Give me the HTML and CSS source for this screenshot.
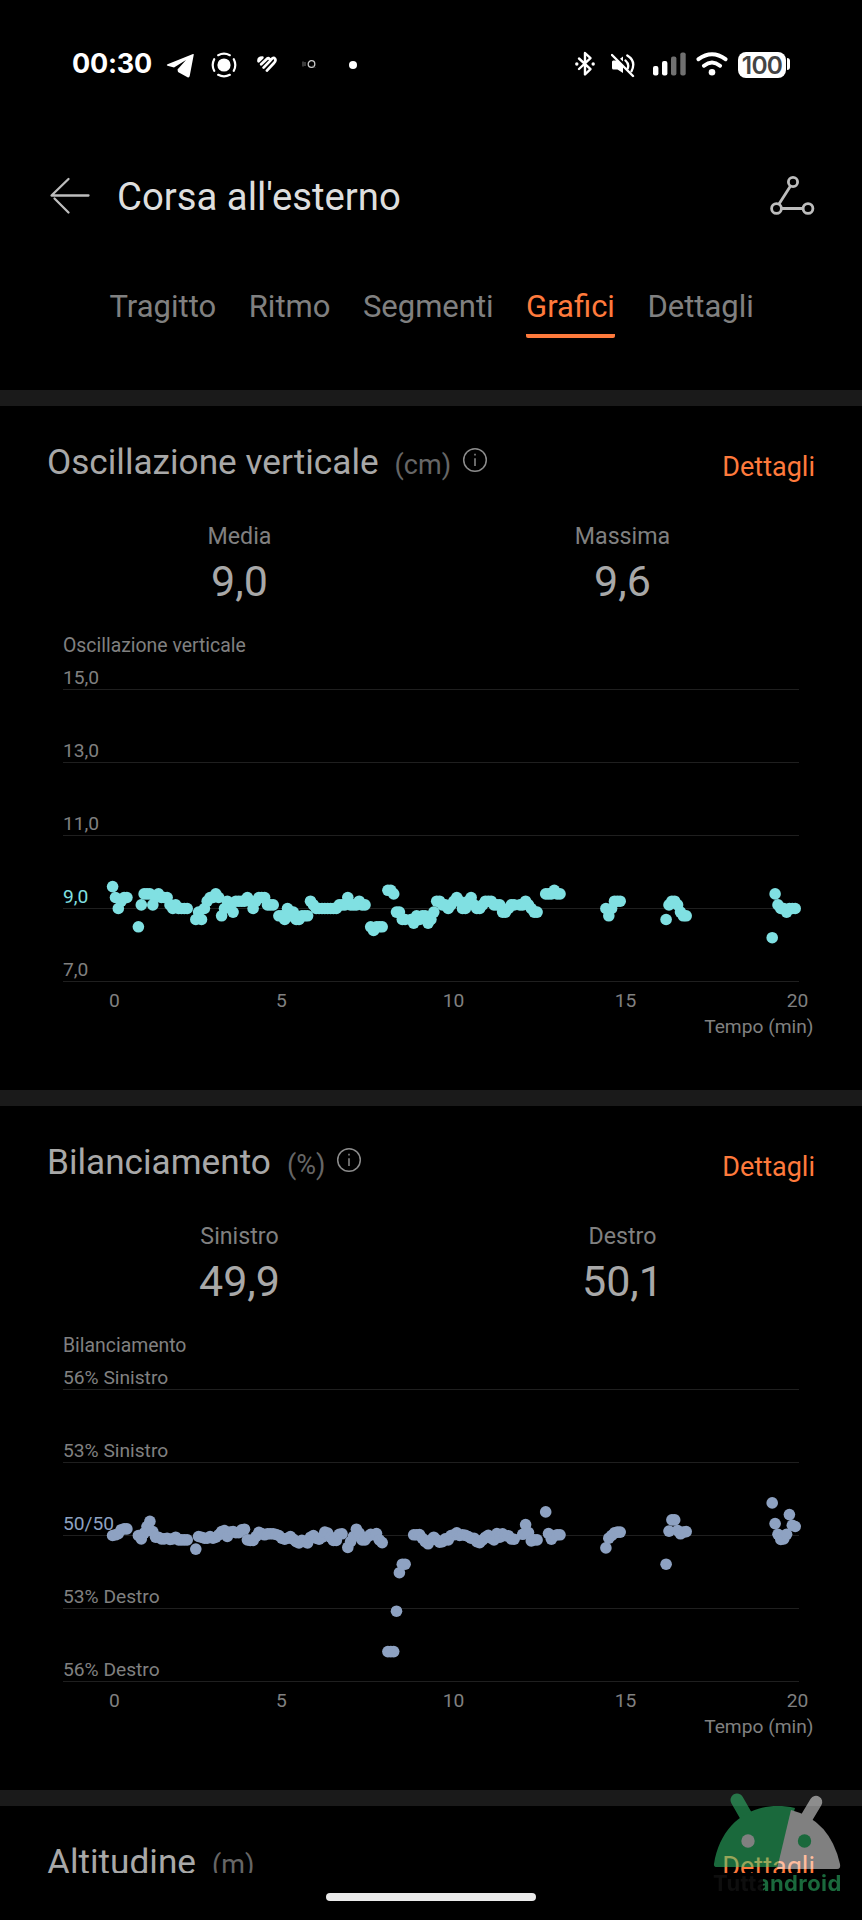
FILE: index.html
```html
<!DOCTYPE html>
<html lang="it">
<head>
  <meta charset="UTF-8">
  <title>Corsa all'esterno</title>
  <link rel="stylesheet" href="styles.css">
</head>
<body>
  <div class="status-bar">
    <div class="status-left">
      <span class="time">00:30</span>
      <svg class="telegram" width="28" height="26" viewBox="0 0 28 26"><path d="M27 1 L1.5 11.3 Q0 12 1.5 12.8 L8 14.6 L20 7 L11.5 16.5 L12 19 L21.5 24.3 Q23.3 25 23.7 23 L27.7 2 Q28 .5 27 1Z" fill="#fff"/></svg>
      <svg class="focus" width="26" height="26" viewBox="0 0 26 26"><circle cx="13" cy="13" r="6.6" fill="#fff"/><path d="M7.2 3.2 Q13 .2 18.8 3.2 M7.2 22.8 Q13 25.8 18.8 22.8 M3.2 7.2 Q.2 13 3.2 18.8 M22.8 7.2 Q25.8 13 22.8 18.8" fill="none" stroke="#fff" stroke-width="2.2" stroke-linecap="round"/></svg>
      <svg class="heart" width="22" height="18" viewBox="0 0 22 18"><path d="M2.6 6.3 Q2 2.6 6.4 2.6 Z M5.2 9.2 L11.3 3.4 Q12.5 2.7 13.4 4 M7.6 12.6 L14.4 5.6 Q17.3 1.4 19 3.8 Q20.3 5.8 18 8 L10.9 15.6" fill="none" stroke="#fff" stroke-width="2.7" stroke-linecap="round" stroke-linejoin="round"/></svg>
      <svg class="mini" width="14" height="10" viewBox="0 0 14 10"><circle cx="9.5" cy="5" r="3.3" fill="none" stroke="#ccc" stroke-width="1.3"/><path d="M1 2.5v5 M3 3v4 M11 6.5l2 2" stroke="#777" stroke-width="1"/></svg>
      <span class="dot"></span>
    </div>
    <div class="status-right">
      <svg width="20" height="26" viewBox="0 0 20 26"><path d="M4 7.5 L15.5 18.2 L10 23.5 V2 L15.5 7.2 L4 18" fill="none" stroke="#fff" stroke-width="2.4" stroke-linejoin="round" stroke-linecap="round"/><circle cx="1.8" cy="13" r="1.7" fill="#fff"/><circle cx="18.2" cy="13" r="1.7" fill="#fff"/></svg>
      <svg class="mute" width="24" height="26" viewBox="0 0 24 26"><path d="M2 8.5 H6 L12 13.5 V21 L6.5 17.5 H2.5 Q1 17.5 1 16 V9.5Z M9 6.7 L12 4.5 V9.5Z" fill="#fff"/><path d="M14.5 8.5 Q18.5 12 16.7 16.5 M16.3 3.4 Q25.5 9 20.5 19.3" fill="none" stroke="#fff" stroke-width="2.3" stroke-linecap="round"/><path d="M1 3 L22 24" stroke="#fff" stroke-width="2.4" stroke-linecap="round"/></svg>
      <svg class="signal" width="34" height="24" viewBox="0 0 34 24"><rect x="0" y="14" width="5.4" height="9.5" rx="2" fill="#fff"/><rect x="9" y="9" width="5.4" height="14.5" rx="2" fill="#fff"/><rect x="18" y="4.5" width="5.4" height="19" rx="2" fill="#707070"/><rect x="27.3" y=".5" width="5.4" height="23" rx="2" fill="#707070"/></svg>
      <svg class="wifi" width="32" height="24" viewBox="0 0 32 24"><path d="M2.5 7.2 Q16 -2.8 29.5 7.2 M8 13.7 Q16 7.3 24 13.7" fill="none" stroke="#fff" stroke-width="4" stroke-linecap="round"/><circle cx="16" cy="20.3" r="3.3" fill="#fff"/></svg>
      <span class="battery">100</span>
      <span class="battery-tip"></span>
    </div>
  </div>

  <header class="app-bar">
    <svg width="40" height="38" viewBox="0 0 40 38"><path d="M38.5 18.5 H1.5 L18.5 2 M4.5 21.5 L18.5 35.5" fill="none" stroke="#bdbdbd" stroke-width="2.3" stroke-linecap="round" stroke-linejoin="round"/></svg>
    <h1>Corsa all'esterno</h1>
    <svg class="route" width="46" height="42" viewBox="0 0 46 42"><g fill="none" stroke="#bdbdbd" stroke-width="2.8"><circle cx="24" cy="7" r="4.6"/><circle cx="7.5" cy="33.5" r="4.9"/><circle cx="39" cy="33.5" r="4.9"/><path d="M21.5 11 L10 29 M12.5 33.5 H34"/></g></svg>
  </header>

  <nav class="tabs">
    <a>Tragitto</a>
    <a>Ritmo</a>
    <a>Segmenti</a>
    <a class="active">Grafici</a>
    <a>Dettagli</a>
  </nav>

  <main>
    <section>
      <div class="section-head">
        <h2>Oscillazione verticale</h2>
        <span class="unit">(cm)</span>
        <svg class="info" width="26" height="26" viewBox="0 0 26 26"><circle cx="13" cy="13" r="11.3"/><path d="M13 11.2V19 M13 6.8V8.6"/></svg>
        <a class="details">Dettagli</a>
      </div>
      <div class="stats">
        <div><span>Media</span><strong>9,0</strong></div>
        <div><span>Massima</span><strong>9,6</strong></div>
      </div>
      <p class="chart-title">Oscillazione verticale</p>
      <svg class="chart cyan" id="oscillation" width="862" height="393"></svg>
    </section>

    <section>
      <div class="section-head">
        <h2>Bilanciamento</h2>
        <span class="unit">(%)</span>
        <svg class="info" width="26" height="26" viewBox="0 0 26 26"><circle cx="13" cy="13" r="11.3"/><path d="M13 11.2V19 M13 6.8V8.6"/></svg>
        <a class="details">Dettagli</a>
      </div>
      <div class="stats">
        <div><span>Sinistro</span><strong>49,9</strong></div>
        <div><span>Destro</span><strong>50,1</strong></div>
      </div>
      <p class="chart-title">Bilanciamento</p>
      <svg class="chart blue" id="balance" width="862" height="393"></svg>
    </section>

    <section>
      <div class="section-head">
        <h2>Altitudine</h2>
        <span class="unit">(m)</span>
        <a class="details">Dettagli</a>
      </div>
    </section>
  </main>

  <div class="home-pill"></div>

  <div class="watermark">
    <svg width="130" height="80" viewBox="0 0 130 80">
      <path d="M24 7 L36 28" stroke="#34d278" stroke-width="13" stroke-linecap="round"/>
      <path d="M1 71 C8 28 42 6 82 15 L65 74 H4 Q.5 74 1 71Z" fill="#34d278"/>
      <path d="M103 9 L91 29" stroke="#fff" stroke-width="12.5" stroke-linecap="round"/>
      <path d="M78 17 Q117 27 127 71 Q128 76 124 76 H64Z" fill="#fff"/>
      <circle cx="35" cy="48" r="6.7" fill="#fff"/>
      <circle cx="91.5" cy="48" r="6.7" fill="#34d278"/>
    </svg>
    <span>Tuttandroid</span>
  </div>

  <script>
    // One sample every 5 seconds, grouped in runs; null = no sample
    const oscillation = [
      { start: 0, values: [9.6, 9.3, 9.0, 9.2, 9.3, 9.3] },
      { start: 9, values: [8.5, 9.1, 9.4, 9.4, 9.4, 9.1, 9.3, 9.4, 9.3, 9.3, 9.3, 9.1, 9.0, 9.1, 9.0, 9.0, 9.0, 9.0] },
      { start: 29, values: [8.7, 8.9, 8.7, 9.0, 9.2, 9.3, 9.3, 9.4, 9.3, 8.8, 9.0, 9.2, 9.1, 8.9, 9.2, 9.2, 9.2, 9.2, 9.3, 9.2, 9.0, 9.2, 9.3, 9.3, 9.3, 9.1, 9.1, 9.1] },
      { start: 58, values: [8.8, 8.8, 8.7, 9.0, 8.8, 8.9, 8.7, 8.7, 8.8, 8.8, 8.8, 9.2, 9.1, 9.0, 9.0, 9.0, 9.0, 9.0, 9.0, 9.0, 9.0, 9.1, 9.1, 9.1, 9.3, 9.1, 9.1, 9.1, 9.2, 9.1, 9.1] },
      { start: 90, values: [8.5, 8.4, 8.5, 8.5, 8.5, null, 9.5, 9.5, 9.4, 8.9, 8.9, 8.7, 8.7, null, 8.7, 8.6, 8.8, 8.7, 8.8, 8.8, 8.6, 8.7, 8.9] },
      { start: 113, values: [9.2, 9.2, 9.1, 9.1, 9.0, 9.1, 9.2, 9.3, 9.2, 9.0, 9.0, 9.2, 9.3, 9.1, 9.0, 9.0, 9.1, 9.2, 9.2, 9.2, 9.1, 9.1, 9.1, 8.9, 8.9, 9.0, 9.1, 9.1, null, 9.1, 9.1, 9.2, 9.1, 9.0, 8.9, 8.9] },
      { start: 151, values: [9.4, 9.4, 9.4, 9.5, 9.4, 9.4] },
      { start: 172, values: [9.0, 8.8, 9.0, 9.2, 9.2, 9.2] },
      { start: 193, values: [8.7, 9.1, 9.2, 9.2, 9.1, 8.9, 8.8, 8.8] },
      { start: 230, values: [8.2, 9.4, 9.1, 9.0, 9.0, 8.9, 9.0, 9.0, 9.0] }
    ];

    // Deviation from 50/50, positive = left
    const balance = [
      { start: 0, values: [0, 0.03, 0.08, 0.24, 0.27, 0.27] },
      { start: 9, values: [0, -0.14, 0.1, 0.37, 0.58, 0.16, -0.07, -0.07, -0.14, -0.14, -0.11, -0.16, -0.14, -0.07, -0.18, -0.18, -0.18, -0.18] },
      { start: 29, values: [-0.56, -0.04, -0.07, -0.11, -0.11, -0.04, -0.11, -0.07, 0.03, 0.16, 0.2, -0.04, 0.14, 0.16, 0.12, 0.12, 0.23, 0.26, -0.18, -0.2, -0.2, -0.04, 0.13, 0.08, 0.03, 0.07, 0.07, 0.07, 0.04, 0, -0.11, -0.15, -0.11, -0.04, -0.15, -0.25, -0.31, -0.2, -0.25, -0.31, -0.07, 0, -0.11, -0.15, -0.07, 0.14, 0.1, -0.07, -0.2, -0.2, 0.05, 0.07] },
      { start: 82, values: [-0.49, -0.25, -0.04, 0.26, 0.1, -0.18, -0.18, -0.04, 0.05, 0.03, 0.08, -0.18, -0.29] },
      { start: 96, values: [-4.77, -4.77, -4.77, -3.11, -1.53, -1.18, -1.18] },
      { start: 105, values: [0.03, 0.03, 0.04, -0.11, -0.25, -0.34, -0.18, -0.07, -0.18, -0.27, -0.25, -0.14, -0.18, 0, 0.03, 0.11, 0, 0.03, 0.01, -0.04, -0.11, -0.11, -0.25, -0.29, -0.18, -0.07, 0.01, -0.11, -0.18, 0.08, -0.07, 0.07, -0.01, -0.01, -0.14, -0.15] },
      { start: 143, values: [0.05, 0.45, 0.12, -0.22, -0.18, -0.18] },
      { start: 151, values: [0.97, 0.08, -0.15, -0.01, 0.03, 0.03] },
      { start: 172, values: [-0.51, -0.11, 0, 0.11, 0.14, 0.14] },
      { start: 193, values: [-1.18, 0.18, 0.64, 0.64, 0.2, 0.07, 0.14, 0.16] },
      { start: 230, values: [1.34, 0.49, 0.05, -0.16, -0.14, 0.05, 0.86, 0.42, 0.37] }
    ];

    const LEFT = 63, RIGHT = 799, TOP = 32.5, STEP = 73;

    function drawChart(id, labels, highlight, runs, toY) {
      let out = "";
      labels.forEach((label, i) => {
        const y = TOP + i * STEP;
        out += `<line x1="${LEFT}" x2="${RIGHT}" y1="${y}" y2="${y}"/>`;
        out += `<text class="${i === highlight ? "mark" : ""}" x="${LEFT}" y="${y - 5.5}">${label}</text>`;
      });
      [[0, 114.5], [5, 281.5], [10, 453.5], [15, 625.5], [20, 797.5]].forEach(([t, x]) => {
        out += `<text class="tick" x="${x}" y="350">${t}</text>`;
      });
      out += `<text class="axis" x="813.5" y="376">Tempo (min)</text>`;
      runs.forEach(run => {
        run.values.forEach((v, i) => {
          if (v === null) return;
          const x = 112.6 + (run.start + i) * 2.868;
          out += `<circle cx="${x.toFixed(1)}" cy="${toY(v).toFixed(1)}" r="5.8"/>`;
        });
      });
      document.getElementById(id).innerHTML = out;
    }

    drawChart("oscillation", ["15,0", "13,0", "11,0", "9,0", "7,0"], 3, oscillation,
      v => TOP + (15 - v) / 2 * STEP);
    drawChart("balance", ["56% Sinistro", "53% Sinistro", "50/50", "53% Destro", "56% Destro"], 2, balance,
      v => TOP + 2 * STEP - v / 3 * STEP);
  </script>
</body>
</html>
```
FILE: styles.css
```css
* { box-sizing: border-box; }
body { margin: 0; width: 862px; height: 1920px; overflow: hidden; position: relative; background: #000; color: #a8a8a8; font-family: Roboto, sans-serif; }
h1, h2, p { margin: 0; font-weight: 400; }
svg { display: block; flex: none; }

.status-bar { display: flex; justify-content: space-between; height: 128px; padding: 0 72px 0 72px; }
.status-left, .status-right { display: flex; align-items: center; }
.time { width: 94px; font: 650 27px/30px Inter, sans-serif; color: #fff; letter-spacing: -0.2px; }
.telegram { margin-top: 4px; }
.focus { margin: 1px 0 0 17px; }
.heart { margin-left: 19px; }
.mini { margin-left: 24px; }
.dot { width: 8px; height: 8px; margin: 1px 0 0 33px; border-radius: 50%; background: #fff; }
.mute { margin: 2px 0 0 16px; }
.signal { margin-left: 18px; }
.wifi { margin-left: 9px; }
.battery { width: 48px; height: 26px; margin: 1px 0 0 10px; border-radius: 8px; background: #fff; color: #444; font: 600 24.5px/26px Inter, sans-serif; letter-spacing: -0.8px; text-align: center; }
.battery-tip { width: 3px; height: 12px; margin-left: 1px; border-radius: 0 3px 3px 0; background: #fff; }

.app-bar { display: flex; align-items: center; height: 136px; padding: 0 47px 0 50px; }
.app-bar h1 { margin: 2px 0 0 27px; font-size: 38.3px; line-height: 48px; color: #dedede; }
.route { margin-left: auto; }

.tabs { display: flex; gap: 32.5px; height: 126px; padding: 23px 0 0 109.5px; align-items: flex-start; font-size: 31px; line-height: 40px; color: #808080; }
.tabs a { padding-bottom: 7px; }
.tabs .active { color: #ff7a3c; border-bottom: 4px solid #ff7a3c; border-radius: 2px; }

main { height: 1483px; overflow: hidden; }
section { height: 700px; padding-top: 34px; border-top: 16px solid #1a1a1a; }
.section-head { display: flex; align-items: baseline; height: 44px; padding: 0 47px; line-height: 45px; }
.section-head h2 { font-size: 35.2px; }
.unit { margin-left: 16px; font-size: 27px; color: #666; }
.info { align-self: flex-start; margin: 7px 0 0 11px; fill: none; stroke: #8c8c8c; stroke-width: 1.5; }
.details { margin-left: auto; font-size: 27px; color: #ff7a3c; position: relative; top: 2px; }

.stats { display: grid; grid-template-columns: 1fr 1fr; margin-top: 38px; padding: 0 48px; text-align: center; }
.stats span { display: block; font-size: 23.2px; line-height: 28px; color: #808080; }
.stats strong { display: block; margin-top: 5px; font-size: 43px; line-height: 52px; font-weight: 400; }

.chart-title { margin: 26px 0 0 63px; font-size: 19.4px; line-height: 25px; height: 24px; color: #808080; }
.chart line { stroke: #1f1f1f; stroke-width: 1; }
.chart text { font-size: 19.2px; fill: #808080; }
.chart .tick { text-anchor: middle; }
.chart .axis { text-anchor: end; }
.chart.cyan circle, .chart.cyan .mark { fill: #80e0e2; }
.chart.blue circle, .chart.blue .mark { fill: #8ea2c2; }

.home-pill { width: 210px; height: 8px; border-radius: 4px; background: #eaeaea; position: absolute; left: 326px; top: 1893px; }

.watermark { position: absolute; left: 713px; top: 1793px; width: 130px; opacity: .5; }
.watermark span { display: block; margin-top: -3px; font: 700 22px/26px Inter, sans-serif; letter-spacing: 0.4px; white-space: nowrap; background: linear-gradient(90deg, #1c1c1c 38.5%, #34d278 38.5%); -webkit-background-clip: text; background-clip: text; color: transparent; }
```
